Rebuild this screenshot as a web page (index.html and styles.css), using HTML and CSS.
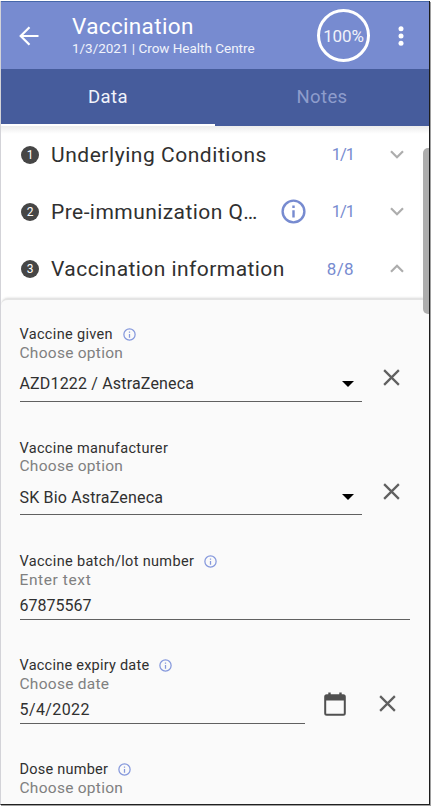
FILE: index.html
```html
<!DOCTYPE html>
<html lang="en">
<head>
<meta charset="utf-8">
<title>Vaccination</title>
<link rel="stylesheet" href="styles.css">
</head>
<body>
<svg width="0" height="0" class="defs" aria-hidden="true">
  <symbol id="info" viewBox="0 0 24 24"><path d="M11 7h2v2h-2zm0 4h2v6h-2zm1-9a10 10 0 1 0 0 20 10 10 0 0 0 0-20zm0 18a8 8 0 1 1 0-16 8 8 0 0 1 0 16z" fill="currentColor"/></symbol>
  <symbol id="close" viewBox="0 0 18 18"><path d="M1.2 1.2l15.6 15.6M16.8 1.2L1.2 16.8" fill="none" stroke="currentColor" stroke-width="2.4"/></symbol>
  <symbol id="down" viewBox="0 0 14 9"><path d="M1 1.2l6 6 6-6" fill="none" stroke="currentColor" stroke-width="2.2"/></symbol>
  <symbol id="up" viewBox="0 0 14 9"><path d="M1 7.8l6-6 6 6" fill="none" stroke="currentColor" stroke-width="2.2"/></symbol>
</svg>
<div class="screen">
  <header class="bar">
    <svg class="back" viewBox="0 0 20 20"><path d="M19.5 10H2M10.5 1.2L1.7 10l8.8 8.8" fill="none" stroke="#fff" stroke-width="2.2"/></svg>
    <div class="titles">
      <h1>Vaccination</h1>
      <p>1/3/2021 | Crow Health Centre</p>
    </div>
    <div class="progress">100%</div>
    <svg class="more" viewBox="0 0 6 20"><g fill="#fff"><circle cx="3" cy="2.8" r="2.5"/><circle cx="3" cy="10" r="2.5"/><circle cx="3" cy="17.2" r="2.5"/></g></svg>
  </header>
  <nav class="tabs">
    <div class="tab active">Data</div>
    <div class="tab">Notes</div>
  </nav>
  <main class="content">
    <section class="row"><span class="num">1</span><h2 class="conditions">Underlying Conditions</h2><span class="count ones">1/1</span><svg class="chev"><use href="#down"/></svg></section>
    <section class="row"><span class="num">2</span><h2>Pre-immunization Q…</h2><svg class="info-lg"><use href="#info"/></svg><span class="count ones">1/1</span><svg class="chev"><use href="#down"/></svg></section>
    <section class="row"><span class="num">3</span><h2>Vaccination information</h2><span class="count">8/8</span><svg class="chev"><use href="#up"/></svg></section>
    <div class="panel">
      <div class="field select">
        <div class="label"><span>Vaccine given</span><svg class="info"><use href="#info"/></svg></div>
        <div class="hint">Choose option</div>
        <div class="line"><div class="value"><span>AZD1222 / AstraZeneca</span><i class="caret"></i></div><svg class="close"><use href="#close"/></svg></div>
      </div>
      <div class="field select">
        <div class="label"><span>Vaccine manufacturer</span></div>
        <div class="hint">Choose option</div>
        <div class="line"><div class="value"><span>SK Bio AstraZeneca</span><i class="caret"></i></div><svg class="close"><use href="#close"/></svg></div>
      </div>
      <div class="field batch">
        <div class="label"><span>Vaccine batch/lot number</span><svg class="info"><use href="#info"/></svg></div>
        <div class="hint">Enter text</div>
        <div class="line"><div class="value"><span>67875567</span></div></div>
      </div>
      <div class="field date">
        <div class="label"><span>Vaccine expiry date</span><svg class="info"><use href="#info"/></svg></div>
        <div class="hint">Choose date</div>
        <div class="line"><div class="value"><span>5/4/2022</span></div>
          <svg class="calendar" viewBox="0 0 22 24"><path d="M5.5 0.5v4M16.5 0.5v4" stroke="#505050" stroke-width="2.4"/><rect x="1.2" y="3.2" width="19.6" height="19.6" rx="1.5" fill="none" stroke="#505050" stroke-width="2"/><path d="M1 3h20v5.5H1z" fill="#505050"/></svg>
          <svg class="close"><use href="#close"/></svg></div>
      </div>
      <div class="field dose">
        <div class="label"><span>Dose number</span><svg class="info"><use href="#info"/></svg></div>
        <div class="hint">Choose option</div>
      </div>
    </div>
    <div class="scrollbar"></div>
  </main>
</div>
</body>
</html>
```
FILE: styles.css
```css
* { box-sizing: border-box; }
body { margin: 0; width: 432px; height: 806px; overflow: hidden; background: #fff; font-family: Roboto, "Liberation Sans", sans-serif; color: #303030; }
h1, h2, p { margin: 0; font-weight: 400; }
svg { display: block; flex: none; }
.defs { position: absolute; }
.screen { width: 430px; height: 804px; margin-top: 1px; border-left: 1px solid #d3d3d8; border-right: 1px solid #1c1c1c; border-bottom: 1px solid #202020; box-shadow: 1px 1px 0 #a0a0a0; display: flex; flex-direction: column; overflow: hidden; }
.bar { flex: none; height: 68px; background: #778bd0; border-top: 1px solid #4667aa; color: #fff; display: flex; align-items: center; padding: 0 25px 0 18px; }
.back { width: 20px; height: 20px; }
.titles { flex: 1; margin-left: 33px; white-space: nowrap; }
.titles h1 { font-size: 22.5px; line-height: 28px; letter-spacing: .35px; }
.titles p { font-size: 13.5px; line-height: 17px; letter-spacing: -.02px; color: #f1f3fb; padding-bottom: 2px; }
.progress { width: 53px; height: 53px; border: 3.5px solid #fff; border-radius: 50%; display: flex; align-items: center; justify-content: center; font-size: 17px; color: #f0f2fa; letter-spacing: -.1px; }
.more { width: 6px; height: 20px; margin-left: 28px; }
.tabs { flex: none; height: 57px; background: #465c9c; display: flex; }
.tab { flex: 1; display: flex; align-items: center; justify-content: center; font-size: 18.5px; letter-spacing: .4px; color: #8e9dcc; border-bottom: 2px solid transparent; }
.tab.active { color: #f1f3fb; border-bottom-color: #fff; }
.content { flex: 1; min-height: 0; position: relative; background: linear-gradient(#ececec, #fff 8px); }
.row { height: 57px; display: flex; align-items: center; padding: 0 25px 0 20px; }
.num { width: 18px; height: 18px; border-radius: 50%; background: #464646; color: #fff; font-size: 12px; display: flex; align-items: center; justify-content: center; }
.row h2 { flex: 1; margin-left: 12px; font-size: 21px; letter-spacing: .44px; white-space: nowrap; }
.row .conditions { letter-spacing: .54px; }
.info-lg { width: 29px; height: 29px; color: #778bd0; margin-right: 24px; }
.count { font-size: 17px; color: #778bd0; letter-spacing: .4px; }
.count.ones { font-size: 16.5px; letter-spacing: -1px; }
.chev { width: 14px; height: 9px; color: #adadad; margin-left: 36px; }
.ones + .chev { margin-left: 36px; }
.panel { margin-top: 1px; height: 520px; background: #fafafa; border-top: 2px solid #e4e4e4; border-radius: 7px 7px 0 0; padding: 25.5px 19px 0 18.5px; box-shadow: 0 -1px 2px #eee; }
.field { height: 104px; }
.field.select { height: 113.5px; }
.label { height: 18px; display: flex; align-items: center; font-size: 14.5px; letter-spacing: .33px; white-space: nowrap; }
.date .label, .dose .label { letter-spacing: .24px; }
.hint { font-size: 15.5px; line-height: 19px; letter-spacing: .27px; color: #808080; }
.batch .hint { letter-spacing: .6px; }
.info { width: 15px; height: 15px; margin-left: 9px; color: #8598dc; }
.line { display: flex; align-items: center; height: 30px; }
.value { flex: 1; height: 30px; border-bottom: 1.5px solid #606060; display: flex; align-items: center; justify-content: space-between; font-size: 16px; letter-spacing: .17px; padding-top: 3px; }
.select .line { height: 39px; }
.select .value { height: 39px; padding: 4px 8px 0 0; }
.batch .value { letter-spacing: 0; }
.date .value { letter-spacing: .4px; }
.caret { border: 6px solid transparent; border-top-color: #000; border-bottom: 0; }
.close { width: 17px; height: 17px; margin: -9px 10px 0 21px; color: #606060; }
.calendar { width: 22px; height: 24px; margin: -10px 0 0 19px; }
.date .close { margin: -10px 14px 0 33px; }
.scrollbar { position: absolute; top: 22px; right: 0; width: 6px; height: 166px; background: #adadad; border-radius: 5px 0 0 5px; }
```
